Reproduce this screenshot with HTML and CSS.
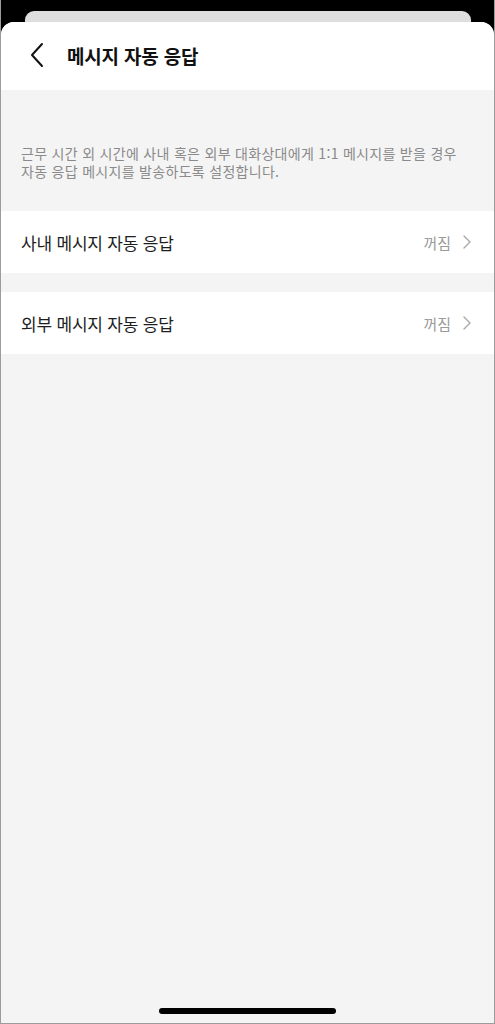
FILE: index.html
```html
<!DOCTYPE html>
<html lang="ko">
<head>
<meta charset="utf-8">
<title>메시지 자동 응답</title>
<link rel="stylesheet" href="styles.css">
</head>
<body>
<div class="frame">
  <div class="backdrop">
    <div class="back-card"></div>
  </div>
  <div class="sheet">
    <header class="header">
      <button class="back" aria-label="뒤로">
        <svg width="16" height="26" viewBox="0 0 16 26"><path d="M13 2 L3 13 L13 24" fill="none" stroke="#111" stroke-width="2" stroke-linecap="round" stroke-linejoin="round"/></svg>
      </button>
      <h1 class="title">메시지 자동 응답</h1>
    </header>
    <div class="content">
      <p class="desc">근무 시간 외 시간에 사내 혹은 외부 대화상대에게 1:1 메시지를 받을 경우<br>자동 응답 메시지를 발송하도록 설정합니다.</p>
      <div class="row">
        <span class="row-label">사내 메시지 자동 응답</span>
        <span class="row-value">꺼짐
          <svg width="10" height="16" viewBox="0 0 10 16"><path d="M2 2 L8 8 L2 14" fill="none" stroke="#a8a8a8" stroke-width="1.4" stroke-linecap="round" stroke-linejoin="round"/></svg>
        </span>
      </div>
      <div class="row row-second">
        <span class="row-label">외부 메시지 자동 응답</span>
        <span class="row-value">꺼짐
          <svg width="10" height="16" viewBox="0 0 10 16"><path d="M2 2 L8 8 L2 14" fill="none" stroke="#a8a8a8" stroke-width="1.4" stroke-linecap="round" stroke-linejoin="round"/></svg>
        </span>
      </div>
      <div class="spacer"></div>
      <div class="home-bar"></div>
    </div>
  </div>
</div>
</body>
</html>
```

FILE: styles.css
```css
* { box-sizing: border-box; }
html, body { margin: 0; padding: 0; }
body {
  font-family: "Noto Sans CJK KR", "Noto Sans", sans-serif;
  background: #000;
}
.frame {
  width: 495px;
  height: 1024px;
  border: 1px solid #9c9c9c;
  border-top: none;
  background: #000;
  display: flex;
  flex-direction: column;
  overflow: hidden;
}
.backdrop {
  height: 23px;
  padding: 11px 23px 0 24px;
  display: flex;
}
.back-card {
  flex: 1;
  background: #dedede;
  border-radius: 9px 9px 0 0;
}
.sheet {
  flex: 1;
  margin-top: -1px;
  background: #f4f4f4;
  border-radius: 13px 13px 0 0;
  overflow: hidden;
  display: flex;
  flex-direction: column;
}
.header {
  height: 68px;
  background: #fff;
  display: flex;
  align-items: center;
  padding: 0 0 2px 28px;
}
.back {
  background: none;
  border: none;
  padding: 0;
  width: 38px;
  height: 26px;
  display: flex;
  align-items: center;
}
.title {
  margin: 0;
  font-size: 19px;
  font-weight: 700;
  color: #111;
  letter-spacing: -0.2px;
}
.content {
  flex: 1;
  display: flex;
  flex-direction: column;
}
.desc {
  margin: 0;
  padding: 54px 20px 31px;
  font-size: 14px;
  line-height: 18px;
  color: #8a8a8a;
  letter-spacing: 0.3px;
}
.row {
  height: 62px;
  background: #fff;
  display: flex;
  align-items: center;
  justify-content: space-between;
  padding: 0 22px 0 20px;
}
.row-second {
  margin-top: 19px;
}
.row-label {
  font-size: 17px;
  color: #1e1e1e;
  letter-spacing: -0.2px;
}
.row-value {
  display: flex;
  align-items: center;
  gap: 11px;
  font-size: 15px;
  color: #9a9a9a;
}
.spacer { flex: 1; }
.home-bar {
  align-self: center;
  width: 177px;
  height: 6px;
  border-radius: 3px;
  background: #000;
  margin-bottom: 9px;
}
```
